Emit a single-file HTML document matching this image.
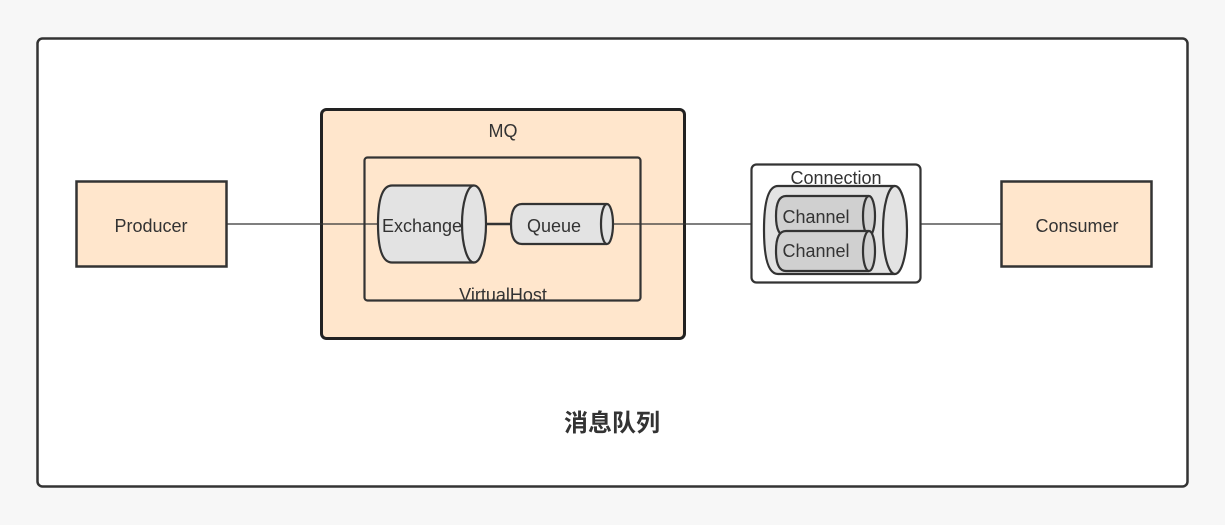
<!DOCTYPE html><html><head><meta charset="utf-8"><style>html,body{margin:0;padding:0;background:#f7f7f7}svg{display:block}text{font-family:"Liberation Sans","Noto Sans CJK SC",sans-serif;fill:#333}</style></head><body>
<svg width="1225" height="525" viewBox="0 0 1225 525">
<rect x="0" y="0" width="1225" height="525" fill="#f7f7f7"/>
<rect x="37.5" y="38.5" width="1150" height="448" rx="5" fill="#fff" stroke="#333" stroke-width="2.5"/>
<rect x="76.5" y="181.5" width="150" height="85" fill="#ffe6cc" stroke="#333" stroke-width="2.5"/>
<text x="151" y="232" font-size="18" text-anchor="middle">Producer</text>
<rect x="1001.5" y="181.5" width="150" height="85" fill="#ffe6cc" stroke="#333" stroke-width="2.5"/>
<text x="1077" y="232" font-size="18" text-anchor="middle">Consumer</text>
<rect x="321.5" y="109.5" width="363" height="229" rx="5" fill="#ffe6cc" stroke="#222" stroke-width="3"/>
<text x="503" y="137" font-size="18" text-anchor="middle">MQ</text>
<rect x="364.5" y="157.5" width="276" height="143" rx="3" fill="none" stroke="#333" stroke-width="2.2"/>
<rect x="751.5" y="164.5" width="169" height="118" rx="5" fill="#fff" stroke="#333" stroke-width="2.2"/>
<g stroke="#333" stroke-width="1.3">
<line x1="227" y1="224" x2="379" y2="224"/>
<line x1="613" y1="224" x2="752" y2="224"/>
<line x1="920" y1="224" x2="1001" y2="224"/>
</g>
<path d="M474 185.5 H392 Q378 185.5 378 224 Q378 262.5 392 262.5 H474" fill="#e3e3e3" stroke="#333" stroke-width="2.2"/>
<ellipse cx="474" cy="224" rx="12" ry="38.5" fill="#e3e3e3" stroke="#333" stroke-width="2.2"/>
<text x="422" y="232" font-size="18" text-anchor="middle">Exchange</text>
<line x1="486" y1="224" x2="512" y2="224" stroke="#333" stroke-width="2.5"/>
<path d="M607 204 H522 Q511 204 511 224 Q511 244 522 244 H607" fill="#e3e3e3" stroke="#333" stroke-width="2.2"/>
<ellipse cx="607" cy="224" rx="6" ry="20" fill="#e3e3e3" stroke="#333" stroke-width="2.2"/>
<text x="554" y="232" font-size="18" text-anchor="middle">Queue</text>
<text x="503" y="301" font-size="18" text-anchor="middle">VirtualHost</text>
<text x="836" y="184" font-size="18" text-anchor="middle">Connection</text>
<path d="M895 186 H778 Q764 186 764 230 Q764 274 778 274 H895" fill="#e3e3e3" stroke="#333" stroke-width="2.2"/>
<ellipse cx="895" cy="230" rx="12" ry="44" fill="#e3e3e3" stroke="#333" stroke-width="2.2"/>
<path d="M869 196 H786 Q776 196 776 216 Q776 236 786 236 H869" fill="#d0d0d0" stroke="#333" stroke-width="2.2"/>
<ellipse cx="869" cy="216" rx="6" ry="20" fill="#d0d0d0" stroke="#333" stroke-width="2.2"/>
<path d="M869 231 H786 Q776 231 776 251 Q776 271 786 271 H869" fill="#d0d0d0" stroke="#333" stroke-width="2.2"/>
<ellipse cx="869" cy="251" rx="6" ry="20" fill="#d0d0d0" stroke="#333" stroke-width="2.2"/>
<text x="816" y="223" font-size="18" text-anchor="middle">Channel</text>
<text x="816" y="257" font-size="18" text-anchor="middle">Channel</text>
<text x="612" y="431" font-size="24" font-weight="bold" text-anchor="middle">消息队列</text>
</svg>
</body></html>
